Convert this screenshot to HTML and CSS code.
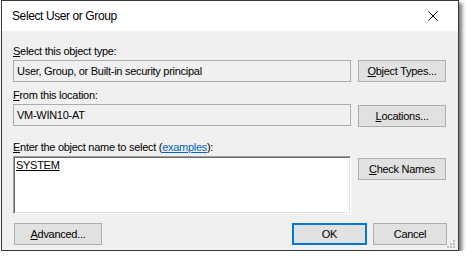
FILE: index.html
```html
<!DOCTYPE html>
<html>
<head>
<title>Select User or Group</title>
<link rel="stylesheet" href="styles.css">
</head>
<body>

<div class="dialog">
	<div class="titlebar">
		<span class="title">Select User or Group</span>
		<button class="close_btn" title="Close">
			<svg width="10" height="10" viewBox="0 0 10 10"><path d="M0.5 0.5L9.5 9.5M9.5 0.5L0.5 9.5" stroke="#000" stroke-width="1" fill="none"/></svg>
		</button>
	</div>
	<div class="content">
		<div class="picker">
			<label class="lbl"><u>S</u>elect this object type:</label>
			<div class="field">User, Group, or Built-in security principal</div>
			<button class="btn"><u>O</u>bject Types...</button>
			<label class="lbl lbl_mid"><u>F</u>rom this location:</label>
			<div class="field">VM-WIN10-AT</div>
			<button class="btn btn_low"><u>L</u>ocations...</button>
			<label class="lbl lbl_names"><u>E</u>nter the object name to select (<a href="#">examples</a>):</label>
			<div class="names"><span class="resolved">SYSTEM</span></div>
			<button class="btn btn_check"><u>C</u>heck Names</button>
		</div>
		<div class="footer">
			<button class="btn btn_adv"><u>A</u>dvanced...</button>
			<div class="spacer"></div>
			<button class="btn btn_ok">OK</button>
			<button class="btn btn_cancel">Cancel</button>
		</div>
	</div>
	<svg class="grip" width="10" height="8" viewBox="0 0 10 8">
		<rect x="7" y="0" width="2" height="2" fill="#bdbdbd"/>
		<rect x="4" y="3" width="2" height="2" fill="#bdbdbd"/>
		<rect x="7" y="3" width="2" height="2" fill="#bdbdbd"/>
		<rect x="1" y="6" width="2" height="2" fill="#bdbdbd"/>
		<rect x="4" y="6" width="2" height="2" fill="#bdbdbd"/>
		<rect x="7" y="6" width="2" height="2" fill="#bdbdbd"/>
	</svg>
</div>

</body>
</html>
```

FILE: styles.css
```css
body
{
	margin : 0;
	background-color : #ffffff;
	font-family : "Liberation Sans", Arial, sans-serif;
	font-size : 11px;
	letter-spacing : -0.28px;
	color : #000000;
}
u
{
	text-decoration : underline;
}
.dialog
{
	position : relative;
	margin-left : 1px;
	width : 456px;
	height : 249px;
	border : 1px solid #3a3a3a;
	background-color : #f0f0f0;
	box-shadow : 3px 3px 4px rgba(0,0,0,0.55);
	display : flex;
	flex-direction : column;
}
.titlebar
{
	height : 30px;
	background-color : #ffffff;
	display : flex;
	align-items : center;
	padding-left : 10px;
}
.title
{
	flex : 1;
	font-size : 12px;
	letter-spacing : -0.4px;
	padding-bottom : 1px;
}
.close_btn
{
	width : 30px;
	height : 30px;
	margin-right : 10px;
	border : 0;
	padding : 0;
	background-color : transparent;
	display : flex;
	align-items : center;
	justify-content : center;
}
.content
{
	flex : 1;
	padding : 14px 11px 0 11px;
}
.picker
{
	display : grid;
	grid-template-columns : 338px 88px;
	column-gap : 7px;
}
.lbl
{
	grid-column : 1 / 3;
	height : 15px;
	line-height : 13px;
}
.lbl_mid
{
	margin-top : 7px;
}
.lbl_names
{
	margin-top : 13px;
	height : 16px;
	line-height : 14px;
}
.lbl a
{
	color : #0066cc;
}
.field
{
	height : 20px;
	border : 1px solid #acacac;
	padding-left : 3px;
	line-height : 20px;
	white-space : nowrap;
}
.names
{
	height : 54px;
	background-color : #ffffff;
	border : 1px solid;
	border-color : #a0a0a0 #ffffff #ffffff #a0a0a0;
	box-shadow : inset 1px 1px 0 #696969, inset -1px -1px 0 #e3e3e3;
	padding : 2px 0 0 2px;
	line-height : 12px;
}
.resolved
{
	text-decoration : underline;
}
.btn
{
	height : 22px;
	padding : 0;
	border : 1px solid #adadad;
	background-color : #e1e1e1;
	font-family : "Liberation Sans", Arial, sans-serif;
	font-size : 11px;
	letter-spacing : -0.28px;
	color : #000000;
}
.btn_low
{
	margin-top : 1px;
}
.btn_check
{
	align-self : start;
	margin-top : 2px;
}
.footer
{
	display : flex;
	margin-top : 9px;
	column-gap : 6px;
}
.spacer
{
	flex : 1;
}
.btn_adv
{
	width : 88px;
	margin-left : 1px;
}
.btn_ok
{
	width : 75px;
	border : 2px solid #0078d7;
}
.btn_cancel
{
	width : 74px;
}
.grip
{
	position : absolute;
	right : 2px;
	bottom : 2px;
}
```
